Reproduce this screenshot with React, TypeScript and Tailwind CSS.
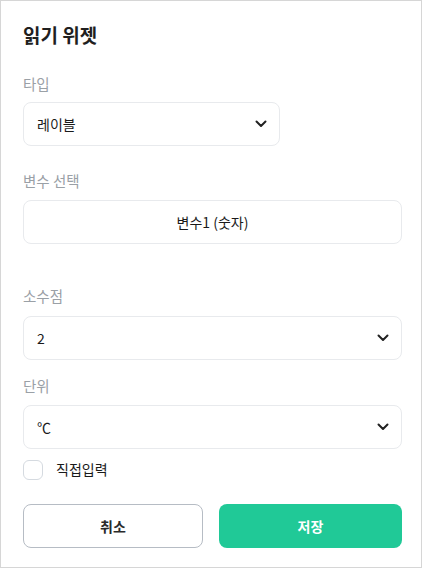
import React from 'react';

const font = { fontFamily: '"Noto Sans CJK KR", "Noto Sans", sans-serif' };

const Chevron = () => (
    <svg width="12" height="8" viewBox="0 0 12 8" fill="none">
        <path d="M1.5 1.5 L6 6 L10.5 1.5" stroke="#222" strokeWidth="2" strokeLinecap="round" strokeLinejoin="round" />
    </svg>
);

const Label = ({ children, className = '' }: { children: React.ReactNode; className?: string }) => (
    <div className={`text-[14.5px] leading-[20px] text-[#9aa0a6] ${className}`}>{children}</div>
);

const SelectBox = ({ value, className = '' }: { value: string; className?: string }) => (
    <div className={`flex h-[44px] items-center justify-between rounded-[8px] border border-[#e8eaed] bg-white pl-[13px] pr-[12px] ${className}`}>
        <span className="text-[14px] text-[#1a1a1a]">{value}</span>
        <Chevron />
    </div>
);

export default function App() {
    return (
        <div style={font} className="h-[568px] w-[422px] border border-[#d6d6d6] bg-white pl-[22px] pr-[19px]">
            <h1 className="mt-[21px] text-[19px] font-bold leading-[26px] text-[#1f1f1f]">읽기 위젯</h1>

            <Label className="mt-[26px]">타입</Label>
            <SelectBox value="레이블" className="mt-[8px] w-[257px]" />

            <Label className="mt-[25px]">변수 선택</Label>
            <div className="mt-[9px] flex h-[44px] items-center justify-center rounded-[8px] border border-[#e8eaed] text-[14px] text-[#1a1a1a]">
                변수1 (숫자)
            </div>

            <Label className="mt-[42px]">소수점</Label>
            <SelectBox value="2" className="mt-[10px]" />

            <Label className="mt-[16px]">단위</Label>
            <SelectBox value="℃" className="mt-[9px]" />

            <label className="mt-[10px] flex items-center gap-[13px]">
                <span className="h-[20px] w-[20px] rounded-[6px] border border-[#d5dae0] bg-white" />
                <span className="text-[14px] text-[#1a1a1a]">직접입력</span>
            </label>

            <div className="mt-[24px] flex gap-[16px]">
                <button className="h-[44px] w-[180px] rounded-[8px] border border-[#b6bcc4] bg-white text-[14px] font-bold text-[#2a2a2a]">취소</button>
                <button className="h-[44px] flex-1 rounded-[8px] bg-[#20c997] text-[14px] font-bold text-white">저장</button>
            </div>
        </div>
    );
}
